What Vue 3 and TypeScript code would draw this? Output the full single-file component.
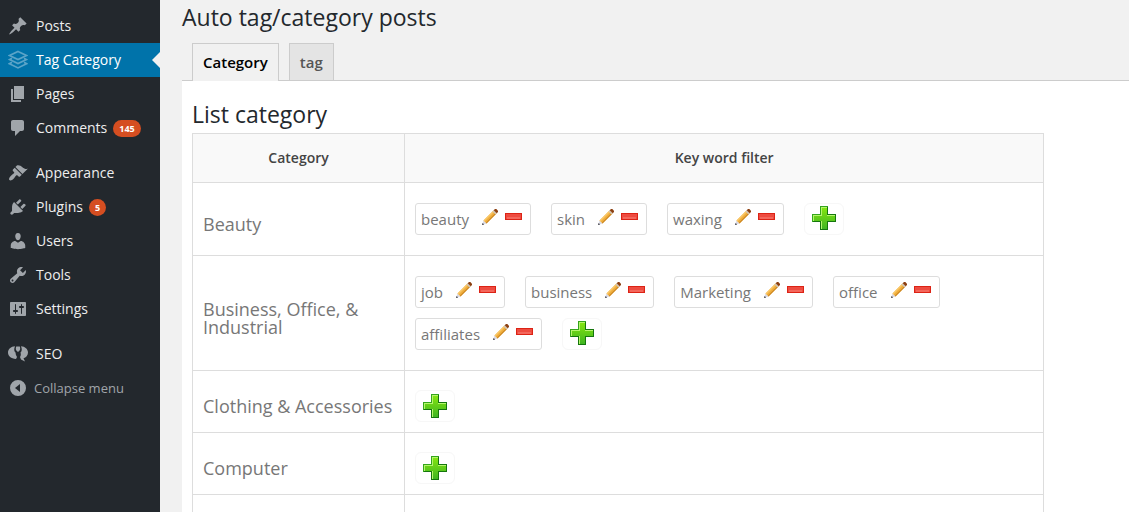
<script setup lang="ts">
import { ref } from 'vue'

interface MenuItem {
  label: string
  icon: string
  count?: number
  active?: boolean
}

interface Category {
  name: string
  keywords: string[]
}

const menuGroups: MenuItem[][] = [
  [
    { label: 'Posts', icon: 'M10.44 3.02l1.82-1.82 6.36 6.35-1.83 1.82c-1.05-.68-2.48-.57-3.41.36l-.75.75c-.92.93-1.04 2.35-.35 3.41l-1.83 1.82-2.41-2.41-2.8 2.79c-.42.42-3.38 2.71-3.8 2.29s1.86-3.39 2.28-3.81l2.79-2.79L4.1 9.36l1.83-1.82c1.05.69 2.48.57 3.4-.36l.75-.75c.93-.92 1.05-2.35.36-3.41z' },
    { label: 'Tag Category', icon: 'layers', active: true },
    { label: 'Pages', icon: 'M6 15V2h10v13H6zm-1 1h8v2H3V5h2v11z' },
    { label: 'Comments', icon: 'M5 2h9c1.1 0 2 .9 2 2v7c0 1.1-.9 2-2 2h-2l-5 5v-5H5c-1.1 0-2-.9-2-2V4c0-1.1.9-2 2-2z', count: 145 },
  ],
  [
    { label: 'Appearance', icon: 'M14.48 11.06L7.41 3.99l1.5-1.5c.5-.56 2.3-.47 3.51.32 1.21.8 1.43 1.28 2.91 2.1 1.18.64 2.45 1.26 4.45.85zm-.71.71L6.7 4.7 4.93 6.47c-.39.39-.39 1.02 0 1.41l1.06 1.06c.39.39.39 1.03 0 1.42-.6.6-1.43 1.11-2.21 1.69-.35.26-.7.53-1.01.84C1.43 14.23.4 16.08 1.4 17.07c.99 1 2.84-.03 4.18-1.36.31-.31.58-.66.85-1.02.57-.78 1.08-1.61 1.69-2.21.39-.39 1.02-.39 1.41 0l1.06 1.06c.39.39 1.02.39 1.41 0z' },
    { label: 'Plugins', icon: 'M13.11 4.36L9.87 7.6 8 5.73l3.24-3.24c.35-.34 1.05-.2 1.56.32.52.51.66 1.21.31 1.55zm-8 1.77l.91-1.12 9.01 9.01-1.19.84c-.71.71-2.63 1.16-3.82 1.16H6.14L4.9 17.26c-.59.59-1.54.59-2.12 0-.59-.58-.59-1.53 0-2.12l1.24-1.24v-3.88c0-1.13.4-3.19 1.09-3.89zm7.26 3.97l3.24-3.24c.34-.35 1.04-.21 1.55.31.52.51.66 1.21.31 1.55l-3.24 3.25z', count: 5 },
    { label: 'Users', icon: 'M10 9.25c-2.27 0-2.73-3.44-2.73-3.44C7 4.02 7.82 2 9.97 2c2.16 0 2.98 2.02 2.71 3.81 0 0-.41 3.44-2.68 3.44zm0 2.57L12.72 10c2.39 0 4.52 2.33 4.52 4.53v2.49s-3.65 1.13-7.24 1.13c-3.65 0-7.24-1.13-7.24-1.13v-2.49c0-2.25 1.94-4.48 4.47-4.48z' },
    { label: 'Tools', icon: 'M16.68 9.77c-1.34 1.34-3.3 1.67-4.95.99l-5.41 6.52c-.99.99-2.59.99-3.58 0s-.99-2.59 0-3.57l6.52-5.42c-.68-1.65-.35-3.61.99-4.95 1.28-1.28 3.12-1.62 4.72-1.06l-2.89 2.89 2.82 2.82 2.86-2.87c.53 1.58.18 3.39-1.08 4.65zM3.81 16.21c.4.39 1.04.39 1.43 0 .4-.4.4-1.04 0-1.43-.39-.4-1.03-.4-1.43 0-.39.39-.39 1.03 0 1.43z' },
    { label: 'Settings', icon: 'M18 16V4c0-.55-.45-1-1-1H3c-.55 0-1 .45-1 1v12c0 .55.45 1 1 1h14c.55 0 1-.45 1-1zM8 11h1c.55 0 1 .45 1 1s-.45 1-1 1H8v1.5c0 .28-.22.5-.5.5s-.5-.22-.5-.5V13H6c-.55 0-1-.45-1-1s.45-1 1-1h1V5.5c0-.28.22-.5.5-.5s.5.22.5.5V11zm5-2h-1c-.55 0-1-.45-1-1s.45-1 1-1h1V5.5c0-.28.22-.5.5-.5s.5.22.5.5V7h1c.55 0 1 .45 1 1s-.45 1-1 1h-1v5.5c0 .28-.22.5-.5.5s-.5-.22-.5-.5V9z' },
  ],
  [
    { label: 'SEO', icon: 'M7 2.200C3 2.500 0 5 0 8.500c0 3.500 3 6 8 6.500l1-2c-1-1.500-1.500-3-1.500-4.500C6 7.500 5.800 5 7 2.200zM8.200 2.500h3.600c.8 2 .6 4-1.800 5.500-2.400-1.500-2.600-3.500-1.800-5.500zM13 2.200c4 .3 7 2.800 7 6.300 0 3-2 5-4.500 5.800l1.500 3.200-4-2-1-2.500c1-1.500 1-3 .5-4.500C14 7.500 14.200 5 13 2.200z' },
  ],
]

const tabs = ['Category', 'tag']
const activeTab = ref('Category')

const categories = ref<Category[]>([
  { name: 'Beauty', keywords: ['beauty', 'skin', 'waxing'] },
  { name: 'Business, Office, & Industrial', keywords: ['job', 'business', 'Marketing', 'office', 'affiliates'] },
  { name: 'Clothing & Accessories', keywords: [] },
  { name: 'Computer', keywords: [] },
])

function removeKeyword(category: Category, index: number) {
  category.keywords.splice(index, 1)
}
</script>

<template>
  <div class="admin">
    <nav class="sidebar" aria-label="Main menu">
      <ul v-for="(group, g) in menuGroups" :key="g" class="menu-group">
        <li v-for="item in group" :key="item.label">
          <a href="#" class="menu-item" :class="{ active: item.active }">
            <svg class="menu-icon" viewBox="0 0 20 20" aria-hidden="true">
              <g v-if="item.icon === 'layers'" class="layers">
                <path d="M10 1.500L18.500 5.500 10 9.500 1.500 5.500z" />
                <path d="M4 8.300L1.500 9.600 10 13.600l8.500-4L16 8.300" />
                <path d="M4 12.300L1.500 13.700 10 17.900l8.500-4.200L16 12.300" />
              </g>
              <path v-else :d="item.icon" />
            </svg>
            <span class="label">{{ item.label }}</span>
            <span v-if="item.count" class="count">{{ item.count }}</span>
          </a>
        </li>
      </ul>
      <button type="button" class="collapse">
        <svg class="menu-icon" viewBox="0 0 20 20" aria-hidden="true">
          <path fill-rule="evenodd" d="M10 2a8 8 0 1 0 0 16 8 8 0 0 0 0-16zM12 6v8l-5-4z" />
        </svg>
        <span>Collapse menu</span>
      </button>
    </nav>

    <main class="content">
      <h1>Auto tag/category posts</h1>
      <div class="tabs" role="tablist">
        <button
          v-for="tab in tabs"
          :key="tab"
          type="button"
          role="tab"
          class="tab"
          :class="{ current: tab === activeTab }"
          :aria-selected="tab === activeTab"
          @click="activeTab = tab"
        >{{ tab }}</button>
      </div>
      <section class="panel">
        <h2>List category</h2>
        <table>
          <thead>
            <tr>
              <th class="name-col" scope="col">Category</th>
              <th scope="col">Key word filter</th>
            </tr>
          </thead>
          <tbody>
            <tr v-for="category in categories" :key="category.name" :class="{ empty: !category.keywords.length }">
              <td class="name">{{ category.name }}</td>
              <td class="filters">
                <div class="chips">
                  <span v-for="(word, i) in category.keywords" :key="word" class="chip">
                    <span class="word">{{ word }}</span>
                    <button type="button" class="icon-button" :aria-label="'Edit ' + word">
                      <svg class="pencil" viewBox="0 0 16 16" aria-hidden="true">
                        <path fill="#d9d9e4" d="M0 16l1.500-4.500 3 3z" />
                        <path fill="#f0ae3c" d="M1.500 11.500L11.500 1.500l3 3-10 10z" />
                        <path fill="#f9c768" d="M1.500 11.500L11.500 1.500l1 1-10 10z" />
                        <path fill="#c98422" d="M3.800 13.800l10-10 .7.7-10 10z" />
                        <path fill="#cfc6b8" d="M10.500 2.500l1.200-1.200 3 3-1.200 1.200z" />
                        <path fill="#8c3f10" d="M11.700 1.300L13 0h1.300L16 1.700V3l-1.300 1.300z" />
                        <path fill="#33333b" d="M0 16l.6-2 1.500 1.400z" />
                      </svg>
                    </button>
                    <button type="button" class="icon-button" :aria-label="'Remove ' + word" @click="removeKeyword(category, i)">
                      <svg class="minus" viewBox="0 0 17 7" aria-hidden="true">
                        <rect width="17" height="7" fill="#dc2315" />
                        <rect x="1" y="1" width="15" height="5" fill="#ee4b40" />
                        <rect x="2" y="4" width="13" height="2" fill="#f4675c" />
                      </svg>
                    </button>
                  </span>
                  <button type="button" class="add" :aria-label="'Add key word to ' + category.name">
                    <svg class="plus" viewBox="0 0 24 24" aria-hidden="true">
                      <defs>
                        <linearGradient id="plus-fill" x1="0" y1="0" x2="0" y2="1">
                          <stop offset="0" stop-color="#86e60f" />
                          <stop offset="1" stop-color="#3fb522" />
                        </linearGradient>
                      </defs>
                      <path fill="#15760e" d="M8 0h8v8h8v8h-8v8H8v-8H0V8h8z" />
                      <path fill="#35a51c" d="M8 0h8v1H9v8H1v7H0V8h8z" />
                      <path fill="url(#plus-fill)" d="M9 1h6v8h8v6h-8v8H9v-8H1V9h8z" />
                      <path fill="#b4f56c" d="M9 1h6v1h-5v8H2v5H1V9h8zM15 9h8v1h-8zM9 15h1v8H9z" />
                    </svg>
                  </button>
                </div>
              </td>
            </tr>
            <tr class="spacer">
              <td></td>
              <td></td>
            </tr>
          </tbody>
        </table>
      </section>
    </main>
  </div>
</template>

<style>
body {
  margin: 0;
  background: #f1f1f1;
}
</style>

<style scoped>
.admin {
  display: flex;
  height: 100vh;
  overflow: hidden;
  color: #444;
  font-family: "Open Sans", sans-serif;
  font-size: 13px;
}

button {
  font-family: inherit;
  cursor: pointer;
}

.sidebar {
  flex: 0 0 160px;
  padding-top: 9px;
  box-sizing: border-box;
  background: #23282d;
}

.menu-group {
  margin: 0 0 11px;
  padding: 0;
  list-style: none;
}

.menu-group:last-of-type {
  margin-bottom: 0;
}

.menu-item,
.collapse {
  display: flex;
  align-items: center;
  height: 34px;
  padding-left: 8px;
  color: #eee;
  font-size: 14px;
  text-decoration: none;
}

.menu-item {
  position: relative;
}

.menu-icon {
  width: 20px;
  height: 20px;
  margin-right: 8px;
  fill: #a0a5aa;
}

.label {
  padding-bottom: 2px;
}

.layers {
  fill: none;
  stroke: #5ba4c8;
  stroke-width: 1.7;
}

.active {
  background: #0073aa;
  color: #fff;
}

.active::after {
  content: "";
  position: absolute;
  top: 9px;
  right: 0;
  border: 8px solid transparent;
  border-left-width: 0;
  border-right-color: #f1f1f1;
}

.count {
  margin-left: 6px;
  padding: 0 6px;
  border-radius: 10px;
  background: #d54e21;
  color: #fff;
  font-size: 9px;
  font-weight: 700;
  line-height: 17px;
}

.collapse {
  border: 0;
  background: none;
  color: #a0a5aa;
  font-size: 13px;
}

.collapse .menu-icon {
  margin-right: 6px;
}

.content {
  flex: 1;
  min-width: 0;
  padding-left: 22px;
}

h1,
h2 {
  margin: 0;
  color: #23282d;
  font-size: 23px;
  font-weight: 400;
  line-height: 29px;
}

h1 {
  padding: 3px 0 11px;
}

.tabs {
  display: flex;
  gap: 10px;
  padding-left: 10px;
  border-bottom: 1px solid #ccc;
}

.tab {
  padding: 6px 10px;
  border: 1px solid #ccc;
  border-bottom: 0;
  background: #e4e4e4;
  color: #555;
  font-size: 15px;
  font-weight: 600;
  line-height: 24px;
}

.tab.current {
  margin-bottom: -1px;
  padding-bottom: 7px;
  background: #f1f1f1;
  color: #000;
}

.panel {
  padding-top: 19px;
  background: #fff;
}

h2 {
  padding: 0 10px 4px;
}

table {
  width: 90%;
  margin-left: 10px;
  border-collapse: collapse;
  table-layout: fixed;
}

th,
td {
  border: 1px solid #ddd;
}

th {
  padding: 15px 10px;
  background: #f9f9f9;
  font-size: 14px;
  font-weight: 600;
  line-height: 18px;
}

.name-col {
  width: 191px;
}

.name {
  padding: 20px 10px 10px;
  color: #777;
  font-size: 18px;
  line-height: 18px;
}

.filters {
  padding: 20px 10px;
}

.empty .name {
  padding-bottom: 12px;
}

.empty .filters {
  padding: 19px 10px 10px;
}

.chips {
  display: flex;
  flex-wrap: wrap;
  gap: 10px 20px;
}

.chip {
  display: flex;
  align-items: flex-start;
  height: 32px;
  padding: 0 8px 0 5px;
  box-sizing: border-box;
  border: 1px solid #ddd;
  border-radius: 3px;
  color: #777;
  font-size: 15px;
  line-height: 30px;
}

.word {
  margin-right: 13px;
}

.icon-button {
  display: flex;
  padding: 5px 0 0;
  border: 0;
  background: none;
}

.icon-button + .icon-button {
  padding: 9px 0 0 7px;
}

.pencil {
  width: 16px;
  height: 16px;
}

.minus {
  width: 17px;
  height: 7px;
}

.add {
  display: flex;
  align-items: center;
  justify-content: center;
  width: 40px;
  height: 32px;
  padding: 0 0 2px;
  border: 1px solid #f7f7f7;
  border-radius: 6px;
  background: #fff;
}

.empty .add {
  padding-bottom: 0;
}

.plus {
  width: 24px;
  height: 24px;
}

.spacer td {
  height: 61px;
}
</style>
